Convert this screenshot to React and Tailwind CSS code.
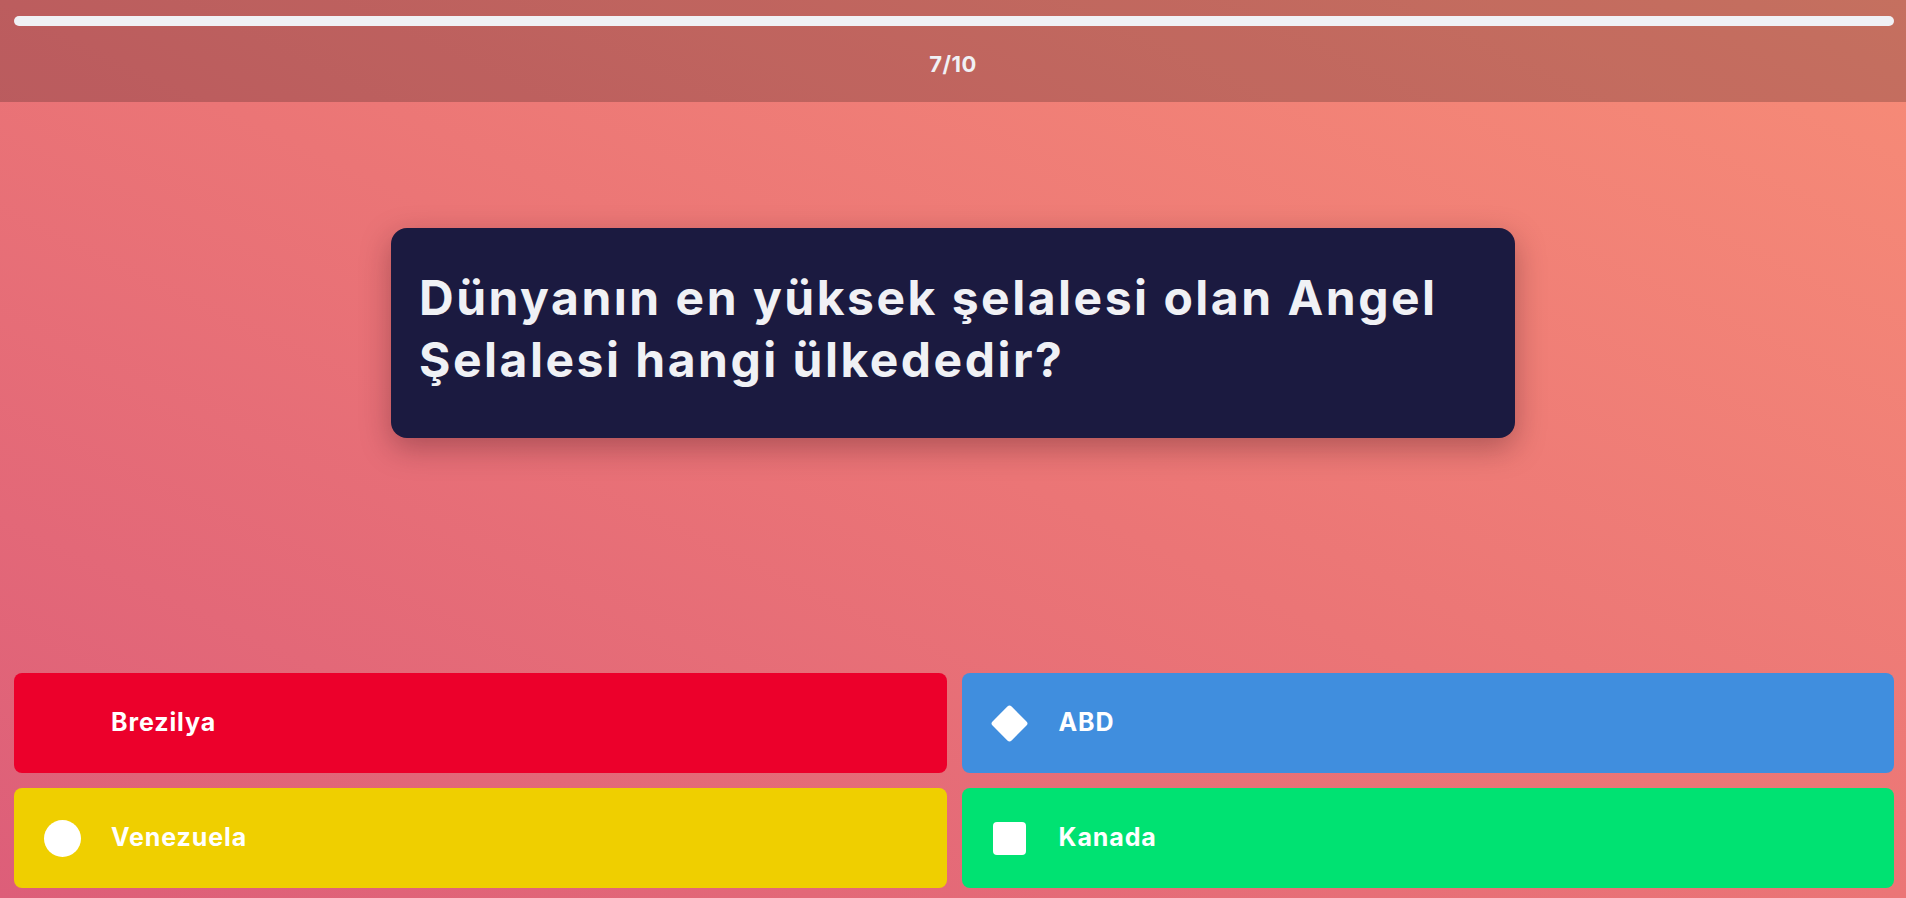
import React from 'react';

const answers = [
  { id: 1, text: 'Brezilya', color: 'bg-[#ec002b]', shape: 'none' },
  { id: 2, text: 'ABD', color: 'bg-[#408ede]', shape: 'diamond' },
  { id: 3, text: 'Venezuela', color: 'bg-[#efcf00]', shape: 'circle' },
  { id: 4, text: 'Kanada', color: 'bg-[#00e272]', shape: 'square' },
];

const Shape = ({ shape }) => {
  if (shape === 'circle') return <div className="w-[37px] h-[37px] rounded-full bg-white" />;
  if (shape === 'square') return <div className="w-[33px] h-[33px] rounded-[4px] bg-white" />;
  if (shape === 'diamond') return <div className="w-[27px] h-[27px] rounded-[3px] bg-white rotate-45" />;
  return null;
};

const App = () => {
  return (
    <div
      className="flex flex-col h-screen w-full overflow-hidden bg-linear-to-tr from-[#dd5e79] via-[#eb7576] to-[#f78c77]"
      style={{ fontFamily: 'Inter, "Noto Sans", sans-serif' }}
    >
      {/* Barra superior */}
      <header className="h-[102px] bg-black/20 flex flex-col shrink-0">
        <div className="pl-[14px] pr-[12px] pt-[16px]">
          <div className="h-[10px] w-full rounded-full bg-[#f0f1f5]" />
        </div>
        <div className="mt-[27px] text-center text-[22px] font-bold text-[#f0f1f5] leading-none tracking-[0.5px]">7/10</div>
      </header>

      {/* Pregunta */}
      <main className="flex-1 flex justify-center">
        <div className="mt-[126px] w-[1124px] h-[210px] rounded-2xl bg-[#1b1a40] px-7 pt-[39px] shadow-[0_10px_30px_rgba(60,20,30,0.35)]">
          <h1 className="text-[48px] font-bold leading-[1.3] text-[#f0f1f5] tracking-[2.5px]">
            Dünyanın en yüksek şelalesi olan Angel Şelalesi hangi ülkededir?
          </h1>
        </div>
      </main>

      {/* Respuestas */}
      <div className="grid grid-cols-2 gap-[15px] pl-[14px] pr-[12px] pb-[10px] shrink-0">
        {answers.map((a) => (
          <button
            key={a.id}
            className={`${a.color} h-[100px] rounded-lg flex items-center text-left`}
          >
            <div className="w-[97px] pl-[29px] flex items-center shrink-0">
              <div className="w-[38px] flex items-center justify-center">
                <Shape shape={a.shape} />
              </div>
            </div>
            <span className="text-[25px] font-bold text-white tracking-[0.9px]">{a.text}</span>
          </button>
        ))}
      </div>
    </div>
  );
};

export default App;
